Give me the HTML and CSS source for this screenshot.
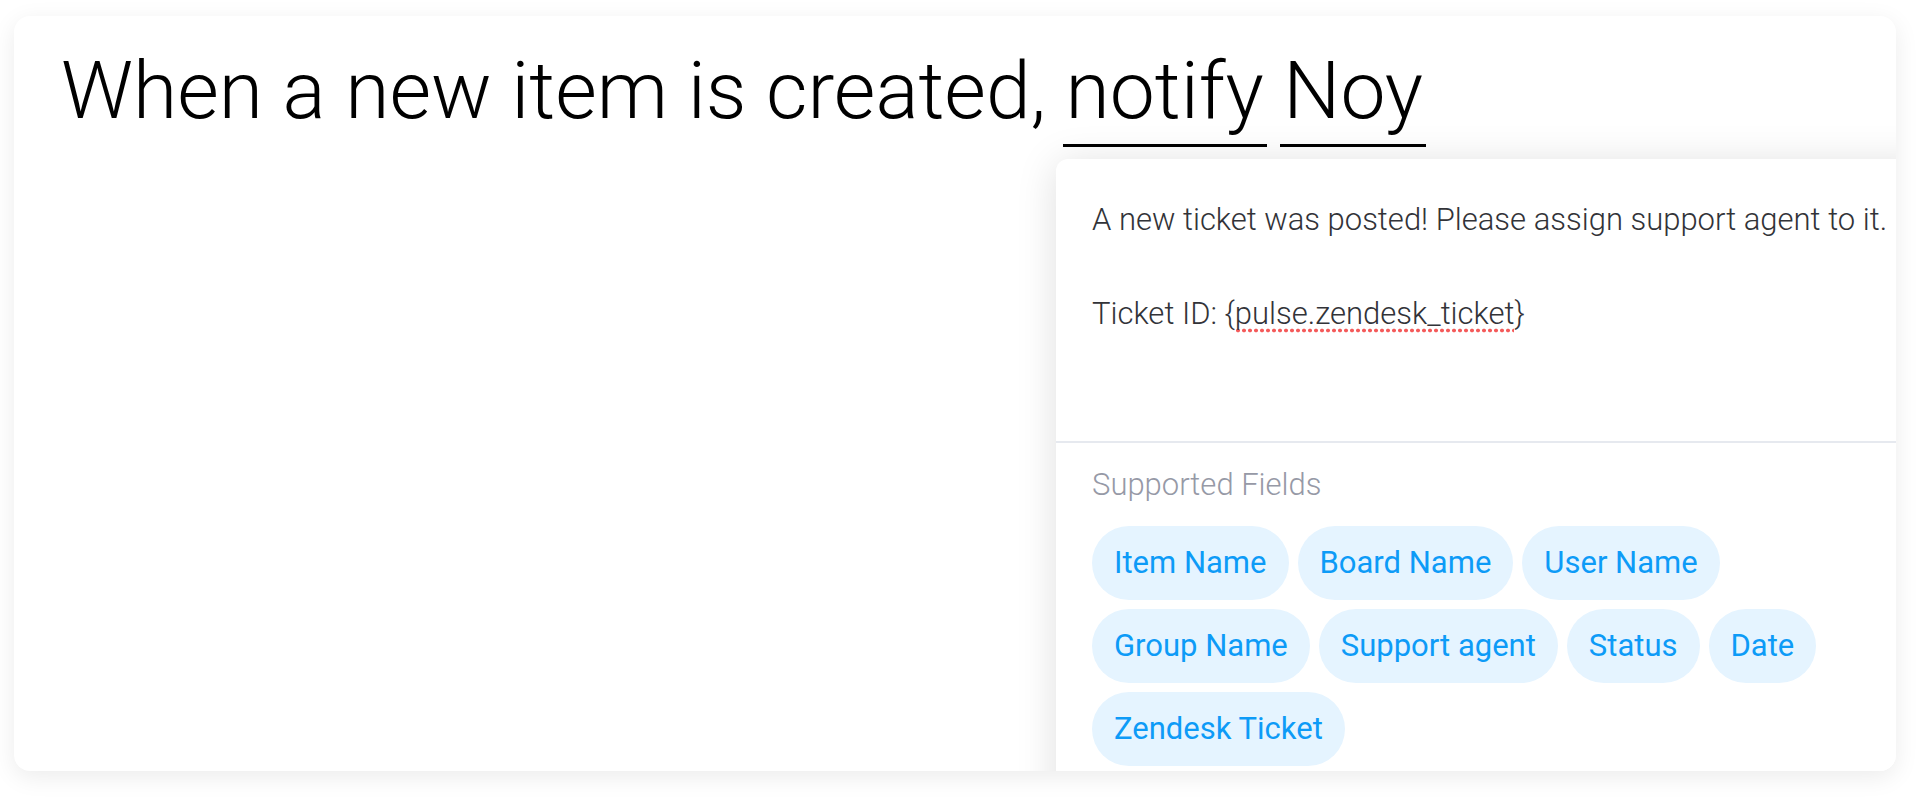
FILE: index.html
```html
<!DOCTYPE html>
<html lang="en">
<head>
    <meta charset="UTF-8">
    <meta name="viewport" content="width=device-width, initial-scale=1.0">
    <title>Automation Recipe</title>
    <link rel="stylesheet" href="styles.css">
</head>
<body>
    <div class="page">
        <div class="card">
            <h1 class="recipe">When a new item is created, <span class="field">notify</span> <span class="field">Noy</span></h1>

            <div class="popup">
                <div class="editor">
                    <p>A new ticket was posted! Please assign support agent to it.</p>
                    <p>&nbsp;</p>
                    <p>Ticket ID: {<span class="misspelled">pulse.zendesk_ticket</span>}</p>
                </div>
                <div class="fields">
                    <div class="fields-title">Supported Fields</div>
                    <div class="chips">
                        <span class="chip">Item Name</span>
                        <span class="chip">Board Name</span>
                        <span class="chip">User Name</span>
                        <span class="chip">Group Name</span>
                        <span class="chip">Support agent</span>
                        <span class="chip">Status</span>
                        <span class="chip">Date</span>
                        <span class="chip">Zendesk Ticket</span>
                    </div>
                </div>
            </div>
        </div>
    </div>
</body>
</html>
```

FILE: styles.css
```css
body {
    margin: 0;
    background-color: #ffffff;
    font-family: Roboto, "Liberation Sans", sans-serif;
}
.page {
    padding: 16px 24px 32px 14px;
}
.card {
    position: relative;
    height: 755px;
    background-color: white;
    border-radius: 16px;
    box-shadow: 0 6px 24px rgba(0, 0, 0, 0.08);
    overflow: hidden;
}
.recipe {
    margin: 0;
    padding: 27px 0 0 47px;
    font-size: 80.4px;
    font-weight: 300;
    color: #000;
}
.field {
    display: inline-block;
    margin: 0 -3px;
    padding: 0 3px 6px;
    border-bottom: 3px solid #000;
}

/* message popup, hangs over the card */
.popup {
    position: absolute;
    left: 1042px;
    top: 143px;
    width: 880px;
    height: 700px;
    background-color: white;
    border-radius: 12px;
    box-shadow: 0 4px 40px rgba(0, 0, 0, 0.13);
}
.editor {
    box-sizing: border-box;
    height: 284px;
    padding: 37px 36px;
    border-bottom: 2px solid #e6e9ef;
    font-size: 31px;
    font-weight: 300;
    line-height: 47px;
    color: #323338;
    white-space: nowrap;
}
.editor p {
    margin: 0;
}
.misspelled {
    padding-bottom: 1px;
    background-image: radial-gradient(circle, #f45b5b 1.6px, transparent 2.2px);
    background-size: 6px 5px;
    background-repeat: repeat-x;
    background-position: 0 100%;
}
.fields {
    padding: 23px 36px 0;
}
.fields-title {
    font-size: 31px;
    font-weight: 300;
    color: #9699a6;
}
.chips {
    display: flex;
    flex-wrap: wrap;
    gap: 9px;
    max-width: 780px;
    margin-top: 23px;
}
.chip {
    height: 74px;
    line-height: 74px;
    padding: 0 22px;
    border-radius: 37px;
    background-color: #e5f4ff;
    color: #0d9bf7;
    font-size: 31px;
    font-weight: 400;
}
```
